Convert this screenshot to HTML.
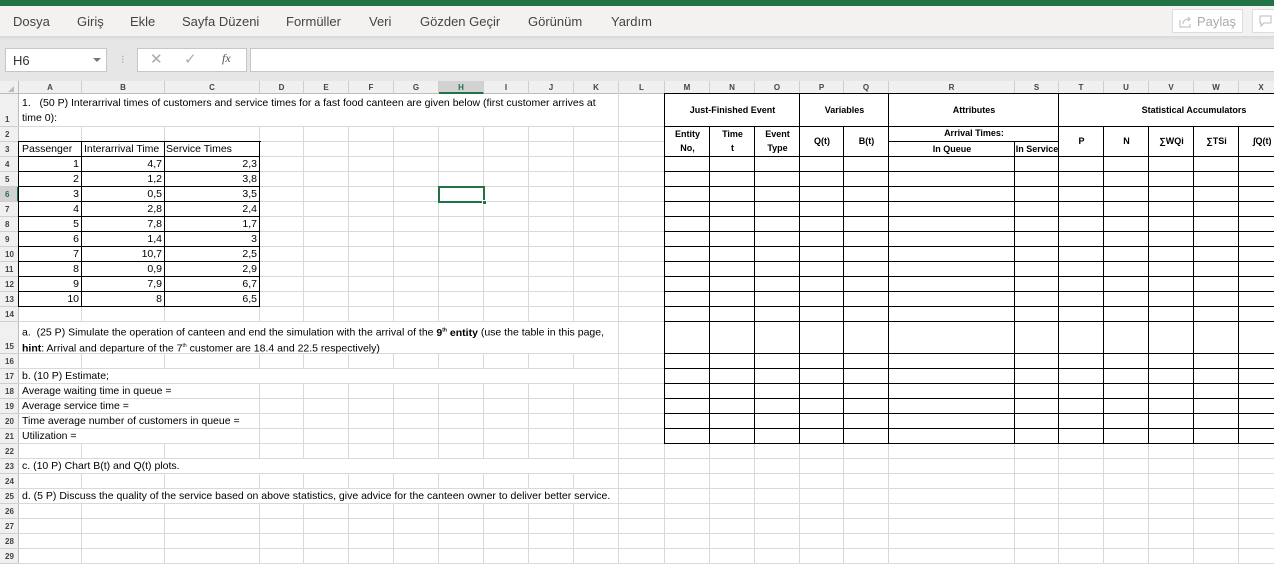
<!DOCTYPE html>
<html><head><meta charset="utf-8">
<style>
*{margin:0;padding:0;box-sizing:border-box}
body{width:1274px;height:553px;overflow:hidden;background:#fff;font-family:"Liberation Sans",sans-serif;position:relative}
.a{position:absolute}
#top{left:0;top:0;width:1274px;height:6px;background:#217346}
#menu{left:0;top:6px;width:1274px;height:30px;background:#f3f2f1}
#menu span{position:absolute;top:8px;font-size:13px;color:#444}
#band{left:0;top:36px;width:1274px;height:45px;background:#e6e6e6}
.box{background:#fff;border:1px solid #c6c6c6}
.t{position:absolute;font-size:10.5px;color:#000;white-space:nowrap;line-height:15px}
.ch{position:absolute;top:81px;height:13px;font-size:8px;font-weight:bold;color:#444;text-align:center;line-height:13px;border-right:1px solid #cfcfcf;border-bottom:1px solid #bcbcbc;background:#f0f0f0}
.rh{position:absolute;left:0;width:19px;font-size:8px;font-weight:bold;color:#444;padding-left:5px;border-bottom:1px solid #cfcfcf;border-right:1px solid #bcbcbc;background:#f0f0f0}
.g{position:absolute;border-right:1px solid #d9d9d9;border-bottom:1px solid #d9d9d9}
.k{position:absolute;border-right:1px solid #000;border-bottom:1px solid #000}
.b{font-weight:bold;font-size:9px;text-align:center}
.r{text-align:right}
</style></head><body>
<div class="a" id="top"></div>
<div class="a" id="menu">
<span style="left:13px">Dosya</span><span style="left:77px">Giriş</span><span style="left:130px">Ekle</span><span style="left:182px">Sayfa Düzeni</span><span style="left:286px">Formüller</span><span style="left:369px">Veri</span><span style="left:420px">Gözden Geçir</span><span style="left:528px">Görünüm</span><span style="left:611px">Yardım</span>
<div class="a box" style="left:1172px;top:3px;width:71px;height:24px;border-color:#ddd;font-size:13px;color:#aaa;padding:4px 0 0 24px">Paylaş</div>
<svg class="a" style="left:1179px;top:9px" width="14" height="13" viewBox="0 0 14 13"><path d="M1 5v7h10V9M4 9c0-4 3-5 7-5M9 2l2 2-2 2" fill="none" stroke="#bbb"/></svg>
<div class="a box" style="left:1252px;top:3px;width:30px;height:24px;border-color:#ddd"></div>
<svg class="a" style="left:1259px;top:9px" width="13" height="12" viewBox="0 0 13 12"><path d="M1 1h11v7H5l-3 3V8H1z" fill="none" stroke="#bbb"/></svg>
</div>
<div class="a" id="band"></div>
<div class="a" style="left:0;top:36px;width:1274px;height:4px;background:linear-gradient(#d8d8d8,#e6e6e6)"></div>
<div class="a box" style="left:5px;top:48px;width:102px;height:24px;font-size:13px;color:#333;padding:4px 0 0 7px">H6</div>
<div class="a" style="left:93px;top:58px;border:4px solid transparent;border-top:4px solid #777"></div>
<div class="a" style="left:121px;top:53px;font-size:11px;color:#aaa">⁝</div>
<div class="a box" style="left:137px;top:48px;width:110px;height:24px"></div>
<div class="a" style="left:150px;top:50px;font-size:15px;color:#aaa">✕</div>
<div class="a" style="left:184px;top:50px;font-size:15px;color:#aaa">✓</div>
<div class="a" style="left:222px;top:51px;font-size:12px;color:#555;font-style:italic;font-family:'Liberation Serif',serif">fx</div>
<div class="a box" style="left:250px;top:48px;width:1030px;height:24px"></div>
<div class="a" style="left:0;top:81px;width:19px;height:13px;background:#f0f0f0;border-right:1px solid #bcbcbc;border-bottom:1px solid #bcbcbc"></div>
<div class="a" style="left:8px;top:86px;border-left:6px solid transparent;border-bottom:6px solid #bbb"></div>
<div id="grid"></div>
<div class="a" style="left:438px;top:186px;width:47px;height:17px;border:2px solid #217346"></div>
<div class="a" style="left:482px;top:200px;width:5px;height:5px;background:#217346;border:1px solid #fff"></div>

<div class="t" style="left:22px;top:96px">1.&nbsp;&nbsp; (50 P) Interarrival times of customers and service times for a fast food canteen are given below (first customer arrives at</div>
<div class="t" style="left:22px;top:111px">time 0):</div>
<div class="t" style="left:22px;top:142px">Passenger</div>
<div class="t" style="left:84px;top:142px">Interarrival Time</div>
<div class="t" style="left:166px;top:142px">Service Times</div>
<div id="nums"></div>
<div class="t" style="left:22px;top:322px;line-height:16px">a.&nbsp; (25 P) Simulate the operation of canteen and end the simulation with the arrival of the <b>9<sup style="font-size:5px">th</sup> entity</b> (use the table in this page,</div>
<div class="t" style="left:22px;top:338px;line-height:16px"><b>hint</b>: Arrival and departure of the 7<sup style="font-size:5px">th</sup> customer are 18.4 and 22.5 respectively)</div>
<div class="t" style="left:22px;top:369px">b. (10 P) Estimate;</div>
<div class="t" style="left:22px;top:384px">Average waiting time in queue =</div>
<div class="t" style="left:22px;top:399px">Average service time =</div>
<div class="t" style="left:22px;top:414px">Time average number of customers in queue =</div>
<div class="t" style="left:22px;top:429px">Utilization =</div>
<div class="t" style="left:22px;top:459px">c. (10 P) Chart B(t) and Q(t) plots.</div>
<div class="t" style="left:22px;top:489px">d. (5 P) Discuss the quality of the service based on above statistics, give advice for the canteen owner to deliver better service.</div>

<div class="t b" style="left:665px;top:103px;width:135px">Just-Finished Event</div>
<div class="t b" style="left:800px;top:103px;width:89px">Variables</div>
<div class="t b" style="left:889px;top:103px;width:170px">Attributes</div>
<div class="t b" style="left:1104px;top:103px;width:180px">Statistical Accumulators</div>
<div class="t b" style="left:665px;top:127px;width:45px;line-height:14px">Entity<br>No,</div>
<div class="t b" style="left:710px;top:127px;width:45px;line-height:14px">Time<br>t</div>
<div class="t b" style="left:755px;top:127px;width:45px;line-height:14px">Event<br>Type</div>
<div class="t b" style="left:800px;top:134px;width:44px">Q(t)</div>
<div class="t b" style="left:844px;top:134px;width:45px">B(t)</div>
<div class="t b" style="left:889px;top:126px;width:170px">Arrival Times:</div>
<div class="t b" style="left:889px;top:142px;width:126px">In Queue</div>
<div class="t b" style="left:1015px;top:142px;width:44px">In Service</div>
<div class="t b" style="left:1059px;top:134px;width:45px">P</div>
<div class="t b" style="left:1104px;top:134px;width:45px">N</div>
<div class="t b" style="left:1149px;top:134px;width:45px">∑WQi</div>
<div class="t b" style="left:1194px;top:134px;width:45px">∑TSi</div>
<div class="t b" style="left:1239px;top:134px;width:45px;text-align:left;padding-left:14px">∫Q(t)</div>

<script>
var X=[19,82,165,260,304,349,394,439,484,529,574,619,665,710,755,800,844,889,1015,1059,1104,1149,1194,1239,1284];
var L="ABCDEFGHIJKLMNOPQRSTUVWX";
var Y=[94,127];for(var i=2;i<=14;i++)Y.push(Y[Y.length-1]+15);Y.push(354);for(i=16;i<=29;i++)Y.push(Y[Y.length-1]+15);
var h="";
for(var c=0;c<24;c++){var hl=c==7;h+='<div class="ch" style="left:'+X[c]+'px;width:'+(X[c+1]-X[c])+'px;'+(hl?'background:#d2d2d2;color:#217346;border-bottom:2px solid #217346':'')+'">'+L[c]+'</div>';}
for(var r=0;r<29;r++){var y0=Y[r],hh=Y[r+1]-y0,hl=r==5;
h+='<div class="rh" style="top:'+y0+'px;height:'+hh+'px;padding-top:'+(hh-12)+'px;'+(hl?'background:#d2d2d2;color:#217346;border-right:2px solid #217346':'')+'">'+(r+1)+'</div>';}
function cell(c1,c2,r1,r2,cls){h+='<div class="'+cls+'" style="left:'+(X[c1]-1)+'px;top:'+(Y[r1]-1)+'px;width:'+(X[c2+1]-X[c1]+1)+'px;height:'+(Y[r2+1]-Y[r1]+1)+'px"></div>';}
var merged={0:[0,10],14:[0,10],16:[0,10],22:[0,10],24:[0,10],17:[0,2],18:[0,2],19:[0,2],20:[0,2]};
for(r=0;r<29;r++){for(c=0;c<24;c++){
 if(c>=12&&r<=20)continue;
 if(c<=2&&r>=2&&r<=12)continue;
 var m=merged[r];if(m&&c>=m[0]&&c<=m[1]){if(c==m[0])cell(m[0],m[1],r,r,'g');continue;}cell(c,c,r,r,'g');}}
h+='<div style="position:absolute;left:18px;top:'+(Y[2]-1)+'px;width:'+(X[3]-18+1)+'px;height:1px;background:#000"></div>';
h+='<div style="position:absolute;left:18px;top:'+(Y[2]-1)+'px;width:1px;height:'+(Y[13]-Y[2]+1)+'px;background:#000"></div>';
for(r=2;r<=12;r++)for(c=0;c<3;c++)cell(c,c,r,r,'k');
h+='<div style="position:absolute;left:'+(X[12]-1)+'px;top:'+(Y[0]-1)+'px;width:'+(X[24]-X[12]+1)+'px;height:1px;background:#000"></div>';
h+='<div style="position:absolute;left:'+(X[12]-1)+'px;top:'+(Y[0]-1)+'px;width:1px;height:'+(Y[21]-Y[0]+1)+'px;background:#000"></div>';
cell(12,14,0,0,'k');cell(15,16,0,0,'k');cell(17,18,0,0,'k');cell(19,23,0,0,'k');
for(c=12;c<=23;c++){if(c==17||c==18)continue;cell(c,c,1,2,'k');}
cell(17,18,1,1,'k');cell(17,17,2,2,'k');cell(18,18,2,2,'k');
for(r=3;r<=20;r++)for(c=12;c<=23;c++)cell(c,c,r,r,'k');
document.getElementById('grid').innerHTML=h;
var A=[[1,"4,7","2,3"],[2,"1,2","3,8"],[3,"0,5","3,5"],[4,"2,8","2,4"],[5,"7,8","1,7"],[6,"1,4","3"],[7,"10,7","2,5"],[8,"0,9","2,9"],[9,"7,9","6,7"],[10,"8","6,5"]];
var n="";for(var i=0;i<10;i++){var y=Y[i+3];for(var j=0;j<3;j++)n+='<div class="t r" style="left:'+X[j]+'px;width:'+(X[j+1]-X[j]-3)+'px;top:'+y+'px">'+A[i][j]+'</div>';}
document.getElementById('nums').innerHTML=n;
</script>
</body></html>
